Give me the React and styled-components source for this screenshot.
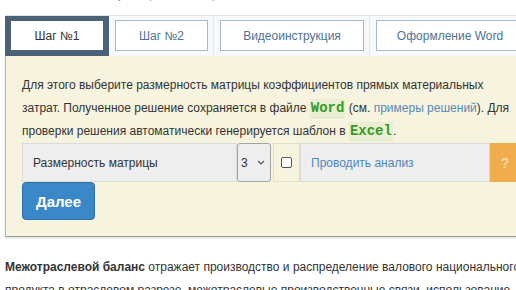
import React from 'react';
import styled, { createGlobalStyle } from 'styled-components';

const Global = createGlobalStyle`
  html, body {
    margin: 0;
    padding: 0;
    background: #ffffff;
    overflow: hidden;
  }
  body {
    font-family: "Liberation Sans", Arial, sans-serif;
    color: #333333;
  }
`;

const Page = styled.div`
  width: 600px;
`;

const Crumbs = styled.div`
  height: 15px;
  overflow: hidden;
  font-size: 12px;
  line-height: 15px;
  color: #aaa;
  padding-left: 40px;

  span {
    display: block;
    margin-top: -13px;
  }
`;

const TabBar = styled.ul`
  display: flex;
  list-style: none;
  margin: 0 0 0 5px;
  padding: 0;
  border-top: 1px solid #dbe4ea;
  background: #f7fafb;
`;

const TabCell = styled.li`
  display: flex;
  padding: ${p => (p.$active ? '4px 5px 5px' : '4px 5px 5px 6px')};
  background: ${p => (p.$active ? '#4b6178' : 'transparent')};
  border-right: ${p => (p.$active ? 'none' : '1px solid #e3e9ed')};
`;

const Tab = styled.a`
  display: flex;
  align-items: center;
  justify-content: center;
  width: ${p => p.$w}px;
  box-sizing: border-box;
  height: 31px;
  border: 1px solid ${p => (p.$active ? '#4b6178' : '#a9b9c6')};
  background: #ffffff;
  font-size: 12px;
  color: ${p => (p.$active ? '#333333' : '#4d7394')};
  text-decoration: none;
  white-space: nowrap;
`;

const Panel = styled.div`
  margin-left: 5px;
  background: #f6f4de;
  border-left: 1px solid #b9b9b0;
  border-bottom: 1px solid #9c9c96;
  box-shadow: 0 1px 2px rgba(0, 0, 0, 0.15);
  padding: 18px 16px 16px;
`;

const Intro = styled.p`
  margin: 0;
  width: 490px;
  font-size: 12px;
  line-height: 23px;
  color: #333333;
`;

const Code = styled.code`
  font-family: "Liberation Mono", "Courier New", monospace;
  font-weight: bold;
  font-size: 14px;
  color: #369a1e;
  background: #e9eed4;
  border-bottom: 1px solid #dfe5c6;
  padding: 1px 1px;
`;

const Link = styled.a`
  color: #5a88b8;
  text-decoration: none;
`;

const InputGroup = styled.div`
  display: flex;
  height: 39px;
`;

const Addon = styled.div`
  display: flex;
  align-items: center;
  width: ${p => p.$w}px;
  box-sizing: border-box;
  padding-left: ${p => p.$pl || 10}px;
  background: ${p => p.$bg || '#eeeeee'};
  border: 1px solid #dcdcd6;
  font-size: 12px;
  color: ${p => p.$color || '#333333'};
`;

const Select = styled.div`
  display: flex;
  align-items: center;
  justify-content: space-between;
  width: 34px;
  box-sizing: border-box;
  padding: 0 5px 0 3px;
  background: #eeeeee;
  border: 1px solid #a4a4a4;
  border-radius: 3px;
  font-size: 12px;
  color: #333333;
`;

const CheckCell = styled.div`
  display: flex;
  align-items: center;
  justify-content: center;
  width: 27px;
  margin-left: 2px;
  box-sizing: border-box;
  background: #f6f4de;
  border: 1px solid #e3e1cb;
`;

const Box = styled.span`
  width: 11px;
  height: 11px;
  box-sizing: border-box;
  border: 1px solid #555555;
  border-radius: 2px;
  background: #ffffff;
`;

const Help = styled.div`
  display: flex;
  align-items: center;
  justify-content: center;
  width: 30px;
  background: #f0ad4e;
  color: #f8d9a8;
  font-size: 14px;
  font-weight: bold;
`;

const Button = styled.button`
  display: block;
  width: 73px;
  height: 38px;
  margin: 0;
  background: #3a88c8;
  border: 1px solid #2c6ea8;
  border-radius: 4px;
  color: #ffffff;
  font-family: "Liberation Sans", Arial, sans-serif;
  font-size: 15px;
  font-weight: bold;
  cursor: pointer;
`;

const Article = styled.p`
  margin: 19px 0 0 5px;
  width: 540px;
  font-size: 12px;
  line-height: 23px;
  color: #333333;

  b {
    color: #333333;
  }
`;

const Chevron = () => (
  <svg width="8" height="5" viewBox="0 0 8 5">
    <path d="M1 1l3 3 3-3" fill="none" stroke="#555" strokeWidth="1.2" />
  </svg>
);

export default function App() {
  return (
    <Page>
      <Global />
      <Crumbs>
        <span>Онлайн-калькуляторы › Межотраслевой баланс › Решение</span>
      </Crumbs>
      <TabBar>
        <TabCell $active>
          <Tab $active $w={94}>Шаг №1</Tab>
        </TabCell>
        <TabCell>
          <Tab $w={93}>Шаг №2</Tab>
        </TabCell>
        <TabCell>
          <Tab $w={144}>Видеоинструкция</Tab>
        </TabCell>
        <TabCell>
          <Tab $w={148}>Оформление Word</Tab>
        </TabCell>
      </TabBar>
      <Panel>
        <Intro>
          Для этого выберите размерность матрицы коэффициентов прямых материальных
          затрат. Полученное решение сохраняется в файле <Code>Word</Code> (см.{' '}
          <Link>примеры решений</Link>). Для проверки решения автоматически
          генерируется шаблон в <Code>Excel</Code>.
        </Intro>
        <InputGroup>
          <Addon $w={215}>Размерность матрицы</Addon>
          <Select>
            3 <Chevron />
          </Select>
          <CheckCell>
            <Box />
          </CheckCell>
          <Addon $w={190} $pl={10} $color="#4f87bd">Проводить анализ</Addon>
          <Help>?</Help>
        </InputGroup>
        <Button>Далее</Button>
      </Panel>
      <Article>
        <b>Межотраслевой баланс</b> отражает производство и распределение валового
        национального продукта в отраслевом разрезе, межотраслевые производственные
        связи, использование
      </Article>
    </Page>
  );
}
